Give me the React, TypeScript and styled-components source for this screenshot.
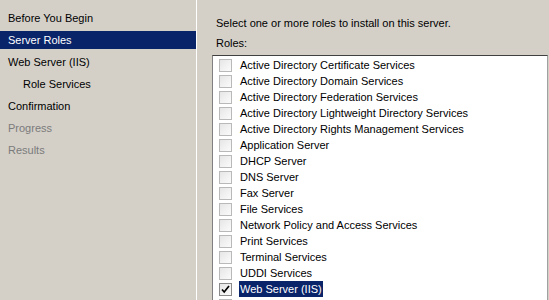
import React from 'react';
import styled, { createGlobalStyle } from 'styled-components';

const GlobalStyle = createGlobalStyle`
  html, body {
    margin: 0;
    padding: 0;
    background: #d4d0c8;
  }
  body {
    font-family: Tahoma, 'Liberation Sans', Arial, sans-serif;
    font-size: 11px;
    color: #000;
  }
`;

const Window = styled.div`
  width: 549px;
  height: 300px;
  display: flex;
  overflow: hidden;
  background: #d4d0c8;
`;

const Nav = styled.div`
  width: 196px;
  flex-shrink: 0;
  padding-top: 9px;
  display: flex;
  flex-direction: column;
`;

interface INavItem {
  $active?: boolean;
  $disabled?: boolean;
  $indent?: boolean;
}
const NavItem = styled.div<INavItem>`
  height: 18px;
  line-height: 18px;
  margin-bottom: 4px;
  padding-left: ${({ $indent }) => ($indent ? '23px' : '8px')};
  background: ${({ $active }) => ($active ? '#0a246a' : 'transparent')};
  color: ${({ $active, $disabled }) =>
    $active ? '#fff' : $disabled ? '#7b7b7b' : '#000'};
  white-space: nowrap;
`;

const Divider = styled.div`
  width: 1px;
  flex-shrink: 0;
  background: #fff;
`;

const Content = styled.div`
  flex-grow: 1;
  padding: 14px 0 0 15px;
  display: flex;
  flex-direction: column;
  min-width: 0;
`;

const Label = styled.div`
  line-height: 18px;
  margin-left: 4px;
  margin-bottom: 2px;
  white-space: nowrap;
`;

const ListBox = styled.div`
  margin-top: 1px;
  margin-right: 1px;
  border-top: 1px solid #404040;
  border-left: 1px solid #808080;
  border-right: 1px solid #a0a0a0;
  background: #fff;
  padding: 1px 0 0 6px;
  flex-grow: 1;
  display: flex;
  flex-direction: column;
`;

const Row = styled.div`
  height: 16px;
  display: flex;
  align-items: center;
  gap: 7px;
  flex-shrink: 0;
`;

interface IBox {
  $checked?: boolean;
}
const Box = styled.div<IBox>`
  width: 11px;
  height: 11px;
  flex-shrink: 0;
  border: 1px solid ${({ $checked }) => ($checked ? '#8a8a8a' : '#b9b9b9')};
  background: linear-gradient(135deg, #e6e6e6 0%, #fbfbfb 100%);
  display: flex;
  align-items: center;
  justify-content: center;
`;

interface IRowText {
  $selected?: boolean;
}
const RowText = styled.span<IRowText>`
  height: 16px;
  line-height: 16px;
  padding: 0 1px;
  white-space: nowrap;
  background: ${({ $selected }) => ($selected ? '#0a246a' : 'transparent')};
  color: ${({ $selected }) => ($selected ? '#fff' : '#000')};
`;

const navItems = [
  { label: 'Before You Begin' },
  { label: 'Server Roles', active: true },
  { label: 'Web Server (IIS)' },
  { label: 'Role Services', indent: true },
  { label: 'Confirmation' },
  { label: 'Progress', disabled: true },
  { label: 'Results', disabled: true },
];

const roles = [
  'Active Directory Certificate Services',
  'Active Directory Domain Services',
  'Active Directory Federation Services',
  'Active Directory Lightweight Directory Services',
  'Active Directory Rights Management Services',
  'Application Server',
  'DHCP Server',
  'DNS Server',
  'Fax Server',
  'File Services',
  'Network Policy and Access Services',
  'Print Services',
  'Terminal Services',
  'UDDI Services',
  'Web Server (IIS)',
];

const CheckMark = () => (
  <svg width='9' height='9' viewBox='0 0 9 9'>
    <path d='M1 4.5 L3.2 7 L8 1' fill='none' stroke='#000' strokeWidth='1.7' />
  </svg>
);

const App = () => {
  return (
    <>
      <GlobalStyle />
      <Window>
        <Nav>
          {navItems.map((item) => (
            <NavItem
              key={item.label}
              $active={item.active}
              $disabled={item.disabled}
              $indent={item.indent}
            >
              {item.label}
            </NavItem>
          ))}
        </Nav>
        <Divider />
        <Content>
          <Label>Select one or more roles to install on this server.</Label>
          <Label>Roles:</Label>
          <ListBox>
            {roles.map((role) => {
              const checked = role === 'Web Server (IIS)';
              return (
                <Row key={role}>
                  <Box $checked={checked}>{checked && <CheckMark />}</Box>
                  <RowText $selected={checked}>{role}</RowText>
                </Row>
              );
            })}
            {/* next row, only the top of its box shows */}
            <Row>
              <Box />
            </Row>
          </ListBox>
        </Content>
      </Window>
    </>
  );
};

export default App;
